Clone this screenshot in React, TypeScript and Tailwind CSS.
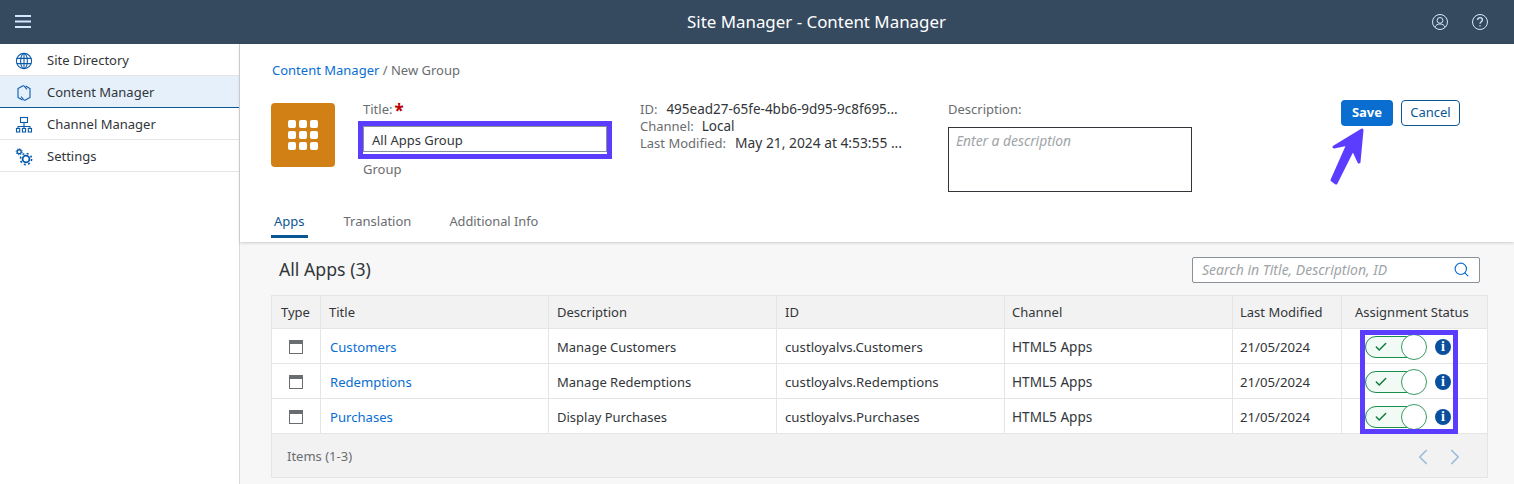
import { Check, ChevronLeft, ChevronRight, Search } from 'lucide-react'
import { ReactNode } from 'react'

const navItems = [
  {
    label: 'Site Directory',
    icon: (
      <svg width="18" height="18" viewBox="0 0 18 18" fill="none" stroke="#0a5bab" strokeWidth="1.1">
        <circle cx="9" cy="9" r="7.6" />
        <ellipse cx="9" cy="9" rx="3.4" ry="7.6" />
        <path d="M1.8 6.4h14.4M1.800 11.600h14.400M9 1.400v15.200" />
      </svg>
    ),
  },
  {
    label: 'Content Manager',
    active: true,
    icon: (
      <svg width="18" height="18" viewBox="0 0 18 18" fill="none" stroke="#0a5bab" strokeWidth="1.1">
        <path d="M10.500 2L15 4.500v9L9.500 16.500" />
        <path d="M7.500 16L3 13.500v-9L8.500 1.500" />
        <path d="M8.500 1.500l3.500 3.800M9.500 16.500L6 12.700" />
      </svg>
    ),
  },
  {
    label: 'Channel Manager',
    icon: (
      <svg width="18" height="18" viewBox="0 0 18 18" fill="none" stroke="#0a5bab" strokeWidth="1.1">
        <rect x="5.500" y="1.500" width="7" height="5" />
        <path d="M9 6.500v4M3 12.500v-2h12v2M9 10.500v2" />
        <rect x="1.500" y="12.500" width="3.200" height="3.500" />
        <rect x="7.400" y="12.500" width="3.200" height="3.500" />
        <rect x="13.300" y="12.500" width="3.200" height="3.500" />
      </svg>
    ),
  },
  {
    label: 'Settings',
    icon: (
      <svg width="18" height="18" viewBox="0 0 18 18" fill="none" stroke="#0a5bab">
        <circle cx="4.200" cy="3.800" r="2" strokeWidth="1.400" />
        <circle cx="4.200" cy="3.800" r="3.100" strokeWidth="0.900" strokeDasharray="1.200 1.200" />
        <circle cx="11" cy="11" r="3.400" strokeWidth="1.800" />
        <circle cx="11" cy="11" r="5.600" strokeWidth="1.600" strokeDasharray="2 2.400" />
      </svg>
    ),
  },
]

const rows = [
  { title: 'Customers', description: 'Manage Customers', id: 'custloyalvs.Customers' },
  { title: 'Redemptions', description: 'Manage Redemptions', id: 'custloyalvs.Redemptions' },
  { title: 'Purchases', description: 'Display Purchases', id: 'custloyalvs.Purchases' },
]

const columns = 'grid grid-cols-[49px_228px_228px_228px_228px_109px_146px]'

function HeadCell({ children, pad, last }: { children: ReactNode; pad: string; last?: boolean }) {
  return <div className={`flex items-center pt-[2px] ${pad} ${last ? '' : 'border-r border-[#e5e5e5]'}`}>{children}</div>
}

function Toggle() {
  return (
    <div className="flex items-center gap-[8px]">
      <div className="relative h-[24px] w-[62px] shrink-0">
        <div className="absolute left-0 top-[1px] flex h-[22px] w-[50px] items-center rounded-l-[11px] border border-[#188f4c] bg-[#f1faf5] pl-[8px]">
          <Check size={14} strokeWidth={2.6} className="text-[#107e3e]" />
        </div>
        <div className="absolute right-0 top-[-1px] size-[26px] rounded-full border border-[#3a9a65] bg-white" />
      </div>
      <div className="flex size-[16px] items-center justify-center rounded-full bg-[#0a4f9e]">
        <span className="font-['Liberation_Serif',serif] text-[14px] font-bold leading-none text-white">i</span>
      </div>
    </div>
  )
}

export default function App() {
  return (
    <div className="relative h-[484px] w-[1514px] overflow-hidden bg-white font-['Noto_Sans',sans-serif] text-[13px] text-[#32363a]">
      {/* Shell bar */}
      <header className="flex h-[44px] items-center bg-[#354a5f] pl-[15px] pr-[26px] text-[#d1e8ff]">
        <svg width="16" height="14" viewBox="0 0 16 14" fill="#d1e8ff">
          <rect y="0" width="16" height="2" />
          <rect y="5.500" width="16" height="2" />
          <rect y="11" width="16" height="2" />
        </svg>
        <h1 className="ml-[656px] text-[16.900px] text-white">Site Manager - Content Manager</h1>
        <div className="ml-auto flex items-center gap-[24px]">
          <svg width="16" height="16" viewBox="0 0 16 16" fill="none" stroke="currentColor" strokeWidth="1">
            <circle cx="8" cy="8" r="7.500" />
            <circle cx="8" cy="6.400" r="2.900" />
            <path d="M3 13.200c.8-2.300 2.600-3.200 5-3.200s4.200.9 5 3.200" />
          </svg>
          <svg width="16" height="16" viewBox="0 0 16 16" fill="none" stroke="currentColor" strokeWidth="1">
            <circle cx="8" cy="8" r="7.500" />
            <path d="M5.600 6.100c0-1.500 1.100-2.400 2.400-2.400s2.400.9 2.400 2.200c0 1.800-2.400 1.900-2.400 3.900" strokeWidth="1.300" />
            <path d="M8 11.200v1.400" strokeWidth="1.300" />
          </svg>
        </div>
      </header>

      <div className="flex h-[440px]">
        {/* Side nav */}
        <nav className="w-[240px] shrink-0 border-r border-[#d9d9d9]">
          {navItems.map((item) => (
            <div
              key={item.label}
              className={`flex h-[32px] items-center gap-[14px] border-b pl-[15px] pt-[2px] ${
                item.active ? 'border-[#0a5796] bg-[#e5f0fa]' : 'border-[#e5e5e5]'
              }`}
            >
              {item.icon}
              <span>{item.label}</span>
            </div>
          ))}
        </nav>

        <main className="flex min-w-0 flex-1 flex-col bg-[#f7f7f7]">
          {/* Object header */}
          <section className="h-[198px] bg-white pl-[32px] shadow-[0_1px_3px_rgba(0,0,0,0.18)]">
            <div className="pt-[17px] leading-[19px]">
              <span className="text-[#0a6ed1]">Content Manager</span>
              <span className="text-[#6a6d70]"> / New Group</span>
            </div>

            <div className="-ml-[1px] mt-[20px] flex">
              <div className="mt-[3px] flex size-[64px] shrink-0 items-center justify-center rounded-[4px] bg-[#d08014]">
                <div className="grid grid-cols-3 gap-[3px]">
                  {Array.from({ length: 9 }).map((_, i) => (
                    <div key={i} className="size-[8px] rounded-[2px] bg-white" />
                  ))}
                </div>
              </div>

              <div className="ml-[28px] w-[244px] shrink-0">
                <div className="flex h-[19px] items-center text-[#6a6d70]">
                  Title:<span className="ml-[2px] mt-[2px] text-[17px] font-bold leading-none text-[#bb0000]">*</span>
                </div>
                <div className="mt-[7px] flex h-[26px] items-center border border-[#89919a] pl-[8px] pt-[4px] text-[#32363a]">
                  All Apps Group
                </div>
                <div className="mt-[8px] text-[#6a6d70]">Group</div>
              </div>

              <div className="ml-[33px] mt-[1px] flex w-[264px] shrink-0 flex-col gap-[0px] text-[#6a6d70]">
                <div className="flex h-[17px] items-center gap-[8px]">
                  ID:<span className="ml-[1px] text-[13.500px] text-[#32363a]">495ead27-65fe-4bb6-9d95-9c8f695...</span>
                </div>
                <div className="flex h-[17px] items-center gap-[8px]">
                  Channel:<span className="text-[13.500px] text-[#32363a]">Local</span>
                </div>
                <div className="flex h-[17px] items-center gap-[9px]">
                  Last Modified:<span className="text-[13.800px] text-[#32363a]">May 21, 2024 at 4:53:55 ...</span>
                </div>
              </div>

              <div className="ml-[44px] w-[244px] shrink-0">
                <div className="leading-[19px] text-[#6a6d70]">Description:</div>
                <div className="mt-[8px] h-[65px] border border-[#32363a] px-[7px] pt-[3px] text-[13.800px] italic text-[#a0a4a8]">
                  Enter a description
                </div>
              </div>

              <div className="ml-[149px] flex gap-[8px]">
                <div className="flex h-[26px] w-[52px] items-center justify-center rounded-[4px] bg-[#0a6ed1] font-bold text-white">
                  Save
                </div>
                <div className="flex h-[26px] w-[59px] items-center justify-center rounded-[4px] border border-[#0a5796] text-[#0a5796]">
                  Cancel
                </div>
              </div>
            </div>

            <div className="mt-[20px] flex gap-[34px] text-[#6a6d70]">
              <div className="relative pb-[6px] pl-[2px] text-[#0a5796]">
                Apps
                <div className="absolute -left-[1px] bottom-0 h-[3px] w-[37px] bg-[#0a5796]" />
              </div>
              <div className="pl-[5px]">Translation</div>
              <div className="pl-[4px] text-[12.800px]">Additional Info</div>
            </div>
          </section>

          {/* Apps table */}
          <section className="pl-[31px] pr-[26px]">
            <div className="flex h-[53px] items-center justify-between pl-[8px] pr-[8px] pt-[2px]">
              <h2 className="text-[17.700px] text-[#32363a]">All Apps (3)</h2>
              <div className="flex h-[26px] w-[288px] items-center justify-between rounded-[2px] border border-[#89919a] bg-white pl-[9px] pr-[9px] text-[14px] italic text-[#a0a4a8]">
                Search in Title, Description, ID
                <Search size={17} strokeWidth={1.6} className="text-[#0a6ed1]" />
              </div>
            </div>

            <div className="border border-[#e5e5e5]">
              <div className={`${columns} h-[33px] border-b border-[#e5e5e5] bg-[#f2f2f2]`}>
                <HeadCell pad="pl-[9px]">Type</HeadCell>
                <HeadCell pad="pl-[8px]">Title</HeadCell>
                <HeadCell pad="pl-[8px]">Description</HeadCell>
                <HeadCell pad="pl-[8px]">ID</HeadCell>
                <HeadCell pad="pl-[7px]">Channel</HeadCell>
                <HeadCell pad="pl-[7px]">Last Modified</HeadCell>
                <HeadCell pad="pl-[13px]" last>
                  Assignment Status
                </HeadCell>
              </div>
              {rows.map((row) => (
                <div key={row.title} className={`${columns} h-[35px] border-b border-[#e5e5e5] bg-white`}>
                  <div className="flex items-center justify-center border-r border-[#e5e5e5] pt-[2px]">
                    <div className="h-[14px] w-[14px] border border-t-[4px] border-[#6a6d70]" />
                  </div>
                  <div className="flex items-center border-r border-[#e5e5e5] pl-[9px] pt-[4px] text-[13.100px] text-[#0a6ed1]">
                    {row.title}
                  </div>
                  <div className="flex items-center border-r border-[#e5e5e5] pl-[8px] pt-[4px]">{row.description}</div>
                  <div className="flex items-center border-r border-[#e5e5e5] pl-[8px] pt-[4px] text-[13.250px]">
                    {row.id}
                  </div>
                  <div className="flex items-center border-r border-[#e5e5e5] pl-[7px] pt-[3px] text-[13.600px]">
                    HTML5 Apps
                  </div>
                  <div className="flex items-center border-r border-[#e5e5e5] pl-[7px] pt-[4px] text-[13.200px]">
                    21/05/2024
                  </div>
                  <div className="flex items-center pl-[23px] pt-[2px]">
                    <Toggle />
                  </div>
                </div>
              ))}
              <div className="flex h-[43px] items-center justify-between bg-[#f2f2f2] pl-[15px] pr-[19px] pt-[3px] text-[#6a6d70]">
                Items (1-3)
                <div className="flex gap-[6px] text-[#9dbbdb]">
                  <ChevronLeft size={26} strokeWidth={1.6} />
                  <ChevronRight size={26} strokeWidth={1.6} />
                </div>
              </div>
            </div>
          </section>
        </main>
      </div>

      {/* Annotations drawn over the screenshot */}
      <div className="absolute left-[358px] top-[121px] h-[38px] w-[254px] border-[5px] border-[#5a3dff]" />
      <div className="absolute left-[1360px] top-[330px] h-[104px] w-[98px] border-[5px] border-[#5a3dff]" />
      <svg className="absolute left-[1324px] top-[120px]" width="44" height="70" viewBox="0 0 44 70">
        <path
          d="M38 10L10 27L24 24L8 60L12 63L29 29L35 42Z"
          fill="#5a3dff"
          stroke="#5a3dff"
          strokeWidth="3"
          strokeLinejoin="round"
        />
      </svg>
    </div>
  )
}
